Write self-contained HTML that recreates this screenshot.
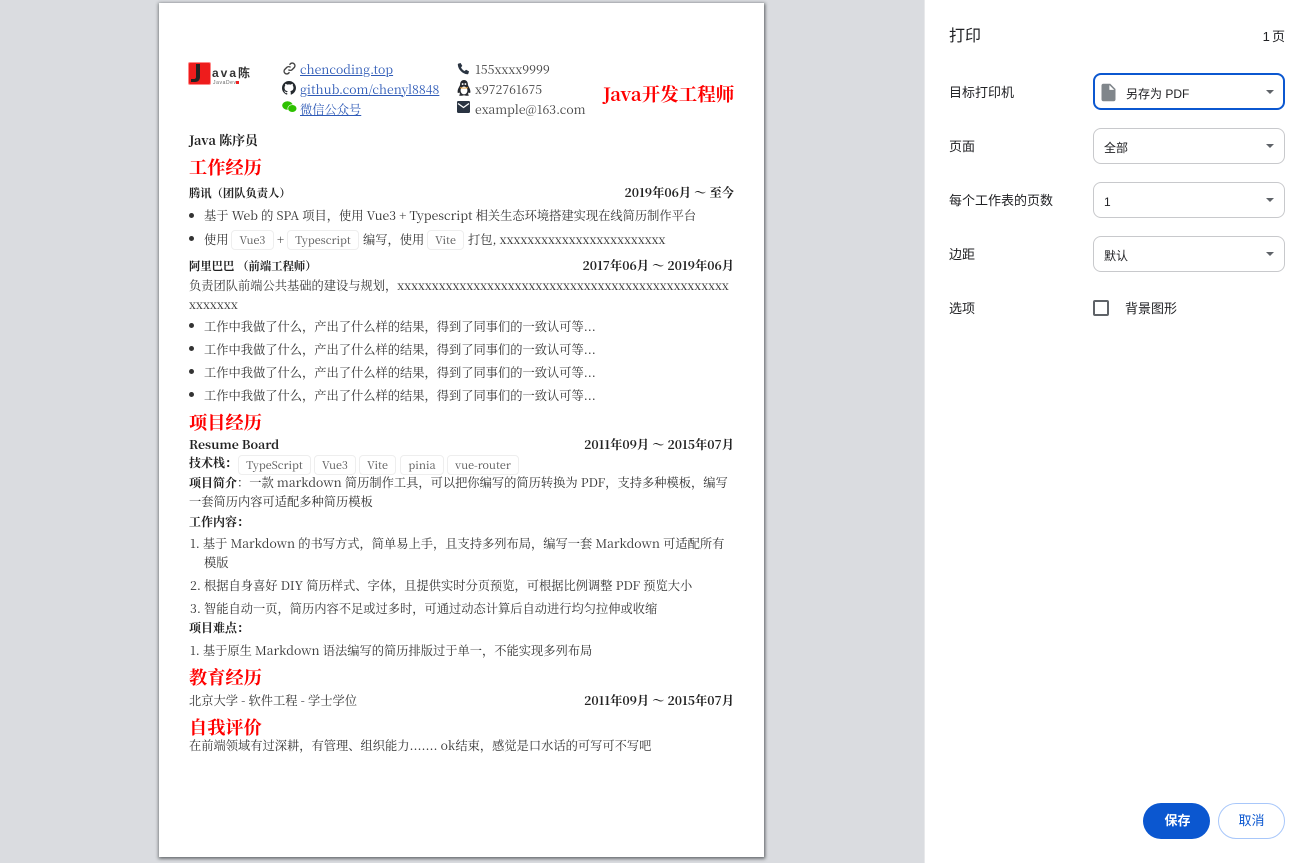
<!DOCTYPE html>
<html lang="zh"><head><meta charset="utf-8"><title>打印</title>
<style>
html,body{margin:0;padding:0;width:1309px;height:863px;overflow:hidden;background:#dadce0;}
#paper{position:absolute;left:159px;top:3px;width:605px;height:854px;background:#fff;box-shadow:0 1px 3px 1px rgba(60,64,67,.45),1px 1px 3px rgba(60,64,67,.5);}
#side{position:absolute;left:924px;top:0;width:385px;height:863px;background:#fff;border-left:1px solid #e8e9eb;box-sizing:border-box;}
.t{position:absolute;white-space:nowrap;font-family:"Noto Serif CJK SC","Liberation Serif",serif;font-size:12.25px;line-height:20px;height:20px;color:#333;}
.x{font-size:12.15px;}
.b{font-weight:700;color:#222;}
.h{font-size:18.2px;font-weight:700;color:#f00;line-height:24px;height:24px;}
.r{text-align:right;}
.a{color:#2f5bb7;text-decoration:underline;}
.c{color:#444;}
.tag{position:absolute;box-sizing:border-box;height:20px;border:1px solid #eeeeee;border-radius:4px;text-align:center;font-family:"Noto Serif CJK SC","Liberation Serif",serif;font-size:10.8px;line-height:19px;color:#555;white-space:nowrap;background:#fff;}
.dot{position:absolute;width:5px;height:5px;border-radius:50%;background:#333;}
.s{position:absolute;white-space:nowrap;font-family:"Liberation Sans","Noto Sans CJK SC",sans-serif;font-size:13px;line-height:18px;height:18px;color:#202124;}
.sel{position:absolute;left:1093px;width:192px;height:36px;box-sizing:border-box;border:1px solid #c8c9cc;border-radius:8px;background:#fff;}
.arr{position:absolute;left:1266px;width:0;height:0;border-left:4px solid transparent;border-right:4px solid transparent;border-top:4px solid #5f6368;}
svg{position:absolute;}
</style></head><body>
<div id="paper"></div>
<div id="side"></div>

<!-- logo -->
<div style="position:absolute;left:188px;top:62px;width:23px;height:23px;background:#ee1c1c;border:1px solid #f88;box-sizing:border-box;border-radius:2px;"></div>
<svg style="left:190px;top:64px" width="14" height="19" viewBox="0 0 14 19"><path d="M6 0h4v13c0 3-2 5-5 5H1v-3h3c1.200 0 2-.8 2-2z" fill="#222"/></svg>
<div class="t" style="left:212px;top:63px;font-size:12px;font-weight:700;letter-spacing:2px;color:#333;font-family:'Liberation Sans','Noto Sans CJK SC',sans-serif;">ava陈</div>
<div class="t" style="left:213px;top:73px;font-size:5px;letter-spacing:.6px;color:#666;font-family:'Liberation Sans',sans-serif;">JavaDev</div>
<div style="position:absolute;left:236px;top:81px;width:3px;height:3px;background:#e22;"></div>

<!-- contact icons -->
<svg style="left:283px;top:62px" width="13" height="13" viewBox="0 0 24 24" fill="none" stroke="#444" stroke-width="2.600"><path d="M10 14a5 5 0 0 0 7 0l4-4a5 5 0 0 0-7-7l-2 2"/><path d="M14 10a5 5 0 0 0-7 0l-4 4a5 5 0 0 0 7 7l2-2"/></svg>
<svg style="left:282px;top:81px" width="14" height="14" viewBox="0 0 16 16" fill="#24292e"><path d="M8 0C3.600 0 0 3.600 0 8c0 3.500 2.300 6.500 5.500 7.600.4.100.5-.2.500-.4v-1.400c-2.200.5-2.700-1-2.700-1-.4-.9-.9-1.200-.9-1.200-.7-.5.100-.5.100-.5.800.1 1.200.8 1.200.8.700 1.200 1.900.9 2.300.7.100-.5.300-.9.500-1.100-1.800-.2-3.600-.9-3.600-4 0-.9.300-1.600.8-2.100-.1-.2-.4-1 .1-2.100 0 0 .7-.2 2.200.8a7.600 7.600 0 0 1 4 0c1.500-1 2.200-.8 2.200-.8.400 1.100.2 1.900.1 2.100.5.600.8 1.300.8 2.100 0 3.100-1.900 3.700-3.700 3.900.3.300.6.800.6 1.500v2.200c0 .2.100.5.600.4A8 8 0 0 0 16 8c0-4.400-3.600-8-8-8z"/></svg>
<svg style="left:282px;top:101px" width="15" height="12" viewBox="0 0 15 12"><ellipse cx="5.500" cy="4.500" rx="5.300" ry="4.300" fill="#2dc100"/><ellipse cx="10.300" cy="7.500" rx="4.500" ry="3.800" fill="#2dc100" stroke="#fff" stroke-width=".6"/></svg>
<div class="t a" style="left:300px;top:59px;">chencoding.top</div>
<div class="t a" style="left:300px;top:79px;">github.com/chenyl8848</div>
<div class="t a" style="left:300px;top:99px;">微信公众号</div>

<svg style="left:457px;top:62px" width="13" height="13" viewBox="0 0 24 24" fill="#2a3442"><path d="M6.600 1.800l3.200 5.400-2.400 2.800c1.300 3 3.600 5.300 6.600 6.600l2.800-2.400 5.400 3.200-1.200 4c-.3.900-1 1.300-2 1.200C10 21.800 2.200 14 1.500 5c-.1-1 .3-1.700 1.200-2z"/></svg>
<svg style="left:457px;top:80px" width="14" height="16" viewBox="0 0 13 15"><path d="M6.500 0C4 0 2.800 2 2.800 4.500c0 1.200-2.300 3.500-2.300 6.500 0 1.500.8 1.500 1.500.5.300 1 1 1.700 1 1.700-1 .4-1.300 1-.9 1.300.6.500 3 .4 4.400-.2 1.400.6 3.800.7 4.400.2.400-.3.100-.9-.9-1.300 0 0 .7-.7 1-1.700.7 1 1.500 1 1.500-.5 0-3-2.300-5.300-2.300-6.500C10.200 2 9 0 6.500 0z" fill="#25282e"/><ellipse cx="6.500" cy="9.800" rx="3.200" ry="3.700" fill="#fff"/><circle cx="5.200" cy="3.800" r=".9" fill="#fff"/><circle cx="7.800" cy="3.800" r=".9" fill="#fff"/><path d="M2.800 6.500q3.700 1.500 7.400 0l-.5 1.500h-6.400z" fill="#e9a23b"/></svg>
<svg style="left:457px;top:101px" width="13" height="12" viewBox="0 0 13 12"><rect width="13" height="12" rx="1.200" fill="#2a3442"/><path d="M1 2.500l5.500 4 5.500-4" fill="none" stroke="#fff" stroke-width="1.300"/></svg>
<div class="t c" style="left:475px;top:59px;">155xxxx9999</div>
<div class="t c" style="left:475px;top:79px;">x972761675</div>
<div class="t c" style="left:475px;top:99px;">example@163.com</div>
<div class="t" style="left:603px;top:81px;font-size:18.500px;font-weight:700;color:#f00;line-height:26px;height:26px;">Java开发工程师</div>

<!-- body -->
<div class="t b" style="left:189px;top:130px;font-size:12.900px;">Java 陈序员</div>
<div class="t h" style="left:189px;top:155px;">工作经历</div>

<div class="t b" style="left:189px;top:183px;font-size:11.300px;">腾讯（团队负责人）</div>
<div class="t b r" style="right:575px;top:182px;">2019年06月 ～ 至今</div>
<div class="dot" style="left:189px;top:213px;"></div>
<div class="t" style="left:204px;top:205px;">基于 Web 的 SPA 项目，使用 Vue3 + Typescript 相关生态环境搭建实现在线简历制作平台</div>
<div class="dot" style="left:189px;top:236px;"></div>
<div class="t" style="left:204px;top:229px;">使用</div>
<div class="tag" style="left:231px;top:230px;width:43px;">Vue3</div>
<div class="t" style="left:277px;top:229px;">+</div>
<div class="tag" style="left:287px;top:230px;width:72px;">Typescript</div>
<div class="t" style="left:363px;top:229px;">编写，使用</div>
<div class="tag" style="left:427px;top:230px;width:37px;">Vite</div>
<div class="t" style="left:468px;top:229px;">打包, <span class="x">xxxxxxxxxxxxxxxxxxxxxxxx</span></div>

<div class="t b" style="left:189px;top:256px;font-size:11.350px;">阿里巴巴 （前端工程师）</div>
<div class="t b r" style="right:575px;top:255px;">2017年06月 ～ 2019年06月</div>
<div class="t" style="left:189px;top:275px;">负责团队前端公共基础的建设与规划，<span class="x">xxxxxxxxxxxxxxxxxxxxxxxxxxxxxxxxxxxxxxxxxxxxxxxx</span></div>
<div class="t" style="left:189px;top:294px;">xxxxxxx</div>
<div class="dot" style="left:189px;top:323px;"></div>
<div class="t" style="left:204px;top:316px;">工作中我做了什么，产出了什么样的结果，得到了同事们的一致认可等...</div>
<div class="dot" style="left:189px;top:346px;"></div>
<div class="t" style="left:204px;top:339px;">工作中我做了什么，产出了什么样的结果，得到了同事们的一致认可等...</div>
<div class="dot" style="left:189px;top:369px;"></div>
<div class="t" style="left:204px;top:362px;">工作中我做了什么，产出了什么样的结果，得到了同事们的一致认可等...</div>
<div class="dot" style="left:189px;top:392px;"></div>
<div class="t" style="left:204px;top:385px;">工作中我做了什么，产出了什么样的结果，得到了同事们的一致认可等...</div>

<div class="t h" style="left:189px;top:410px;">项目经历</div>
<div class="t b" style="left:189px;top:434px;">Resume Board</div>
<div class="t b r" style="right:575px;top:434px;">2011年09月 ～ 2015年07月</div>
<div class="t b" style="left:189px;top:453px;font-size:12px;">技术栈：</div>
<div class="tag" style="left:238px;top:455px;width:73px;">TypeScript</div>
<div class="tag" style="left:314px;top:455px;width:42px;">Vue3</div>
<div class="tag" style="left:359px;top:455px;width:37px;">Vite</div>
<div class="tag" style="left:400px;top:455px;width:44px;">pinia</div>
<div class="tag" style="left:447px;top:455px;width:72px;">vue-router</div>
<div class="t" style="left:189px;top:472px;"><span class="b" style="font-size:12px;">项目简介</span>：一款 markdown 简历制作工具，可以把你编写的简历转换为 PDF，支持多种模板，编写</div>
<div class="t" style="left:189px;top:491px;">一套简历内容可适配多种简历模板</div>
<div class="t b" style="left:189px;top:512px;font-size:12px;">工作内容：</div>
<div class="t" style="left:190px;top:533px;">1. 基于 Markdown 的书写方式，简单易上手，且支持多列布局，编写一套 Markdown 可适配所有</div>
<div class="t" style="left:204px;top:552px;">模版</div>
<div class="t" style="left:190px;top:575px;">2. 根据自身喜好 DIY 简历样式、字体，且提供实时分页预览，可根据比例调整 PDF 预览大小</div>
<div class="t" style="left:190px;top:598px;">3. 智能自动一页，简历内容不足或过多时，可通过动态计算后自动进行均匀拉伸或收缩</div>
<div class="t b" style="left:189px;top:618px;font-size:12px;">项目难点：</div>
<div class="t" style="left:190px;top:640px;">1. 基于原生 Markdown 语法编写的简历排版过于单一，不能实现多列布局</div>

<div class="t h" style="left:189px;top:665px;">教育经历</div>
<div class="t" style="left:189px;top:690px;">北京大学 - 软件工程 - 学士学位</div>
<div class="t b r" style="right:575px;top:690px;">2011年09月 ～ 2015年07月</div>
<div class="t h" style="left:189px;top:715px;">自我评价</div>
<div class="t" style="left:189px;top:735px;">在前端领域有过深耕，有管理、组织能力....... ok结束，感觉是口水话的可写可不写吧</div>

<!-- sidebar -->
<div class="s" style="left:949px;top:27px;font-size:16px;line-height:20px;height:20px;">打印</div>
<div class="s r" style="right:24px;top:28px;word-spacing:-1.500px;">1 页</div>
<div class="s" style="left:949px;top:84px;">目标打印机</div>
<div class="sel" style="top:73px;height:37px;border:2px solid #0b57d0;"></div>
<svg style="left:1097.500px;top:82.300px" width="21" height="21" viewBox="0 0 24 24"><path fill-rule="evenodd" d="M6 2c-1.100 0-2 .9-2 2v16c0 1.100.9 2 2 2h12c1.100 0 2-.9 2-2V8l-6-6H6zm7 7V3.500L18.500 9H13z" fill="#80868b"/></svg>
<div class="s" style="left:1126px;top:85px;font-size:12px;">另存为 PDF</div>
<div class="arr" style="top:90px;"></div>

<div class="s" style="left:949px;top:138px;">页面</div>
<div class="sel" style="top:128px;"></div>
<div class="s" style="left:1104px;top:139px;font-size:12px;">全部</div>
<div class="arr" style="top:144px;"></div>

<div class="s" style="left:949px;top:192px;">每个工作表的页数</div>
<div class="sel" style="top:182px;"></div>
<div class="s" style="left:1104px;top:193px;font-size:12px;">1</div>
<div class="arr" style="top:198px;"></div>

<div class="s" style="left:949px;top:246px;">边距</div>
<div class="sel" style="top:236px;"></div>
<div class="s" style="left:1104px;top:247px;font-size:12px;">默认</div>
<div class="arr" style="top:252px;"></div>

<div class="s" style="left:949px;top:300px;">选项</div>
<div style="position:absolute;left:1093px;top:300px;width:16px;height:16px;box-sizing:border-box;border:2px solid #5f6368;border-radius:2px;"></div>
<div class="s" style="left:1125px;top:300px;">背景图形</div>

<div style="position:absolute;left:1143px;top:803px;width:67px;height:36px;border-radius:18px;background:#0b57d0;"></div>
<div class="s" style="left:1144px;top:812px;width:67px;text-align:center;color:#fff;font-weight:700;">保存</div>
<div style="position:absolute;left:1218px;top:803px;width:67px;height:36px;box-sizing:border-box;border-radius:18px;border:1px solid #a8c7fa;background:#fff;"></div>
<div class="s" style="left:1218px;top:812px;width:67px;text-align:center;color:#0b57d0;">取消</div>
</body></html>
